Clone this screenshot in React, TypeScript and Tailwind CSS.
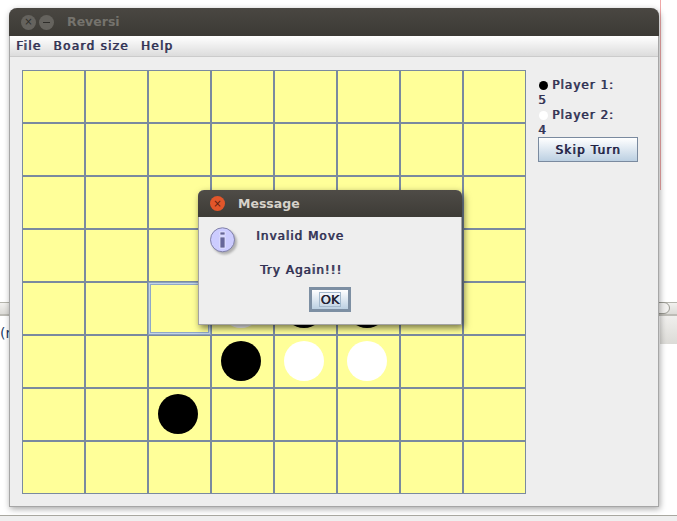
const rows = [0, 1, 2, 3, 4, 5, 6, 7]
const cols = [0, 1, 2, 3, 4, 5, 6, 7]

// board state: row-col -> stone colour
const stones: Record<string, string> = {
  "4-3": "bg-white",
  "4-4": "bg-black",
  "4-5": "bg-black",
  "5-3": "bg-black",
  "5-4": "bg-white",
  "5-5": "bg-white",
  "6-2": "bg-black",
}

// java's synthetic bold: regular glyphs, struck twice, one px wider per glyph
const swingBold = "text-[12px] font-normal tracking-[1px] [text-shadow:0.8px_0_0_currentColor]"

function Board() {
  return (
    <div className="grid grid-cols-[repeat(8,63px)] grid-rows-[repeat(8,53px)]">
      {rows.map((r) =>
        cols.map((c) => {
          const selected = r === 4 && c === 2
          return (
            <div
              key={r + "-" + c}
              className={
                "pl-[9px] pt-[5px] bg-[#ffff99] border " +
                (selected
                  ? "border-[#8aa3bf] shadow-[inset_0_0_0_1px_#c4d4e4,inset_0_0_0_2px_#8fa8c8]"
                  : "border-[#7a8a9f]")
              }
            >
              {stones[r + "-" + c] && <div className={"w-[40px] h-[40px] rounded-full " + stones[r + "-" + c]} />}
            </div>
          )
        })
      )}
    </div>
  )
}

function InfoIcon() {
  return (
    <svg width="30" height="30" viewBox="0 0 30 30" className="shrink-0">
      <defs>
        <filter id="ishadow" x="-20%" y="-20%" width="150%" height="150%">
          <feGaussianBlur stdDeviation="1.2" />
        </filter>
      </defs>
      <circle cx="14.500" cy="15" r="12.500" fill="#888" opacity="0.6" filter="url(#ishadow)" />
      <circle cx="12.500" cy="12.800" r="12" fill="#ccccff" stroke="#8080a8" strokeWidth="1" />
      <rect x="10" y="5" width="5" height="3" fill="#666699" stroke="#eeeeff" strokeWidth="0.7" />
      <rect x="10" y="10" width="5" height="11" fill="#666699" stroke="#eeeeff" strokeWidth="0.7" />
    </svg>
  )
}

function Dialog() {
  return (
    <div className="absolute left-[198px] top-[190px] w-[264px] h-[135px] flex flex-col rounded-t-[6px] border border-t-0 border-[#a3a3a3] bg-[#eeeeee] shadow-[2px_3px_7px_rgba(0,0,0,0.55)]">
      <div className="h-[27px] shrink-0 flex items-center -mx-px rounded-t-[6px] bg-gradient-to-b from-[#4f4c47] to-[#3d3b36]">
        <div className="ml-[12px] w-[15px] h-[15px] rounded-full bg-[#e2562a] flex items-center justify-center text-[10px] leading-none text-[#5a2010]">×</div>
        <span className="ml-[13px] pt-px text-[12.500px] font-bold text-[#d6d2ca]">Message</span>
      </div>
      <div className={"flex flex-col flex-1 text-[#333355] " + swingBold}>
        <div className="flex h-[41px] pl-[11px] pt-[10px]">
          <InfoIcon />
          <span className="ml-[16px] leading-[18px]">Invalid Move</span>
        </div>
        <div className="pl-[61px] mt-[3px] leading-[18px]">Try Again!!!</div>
        <div className="flex justify-center mt-[8px]">
          <div className="w-[42px] h-[25px] border-[3px] border-[#7d8fa3] bg-gradient-to-b from-white to-[#bcd0e2] flex items-center justify-center">
            <span className="w-[22px] h-[15px] border border-[#a3b8cc] text-center text-[13px] tracking-normal leading-[13px] text-[#222233] [text-shadow:0.4px_0_0_currentColor]">OK</span>
          </div>
        </div>
      </div>
    </div>
  )
}

function SidePanel() {
  return (
    <div className={"ml-[12px] w-[100px] pt-[8px] leading-[15px] text-[#333355] " + swingBold}>
      <div className="flex items-center">
        <div className="w-[9px] h-[9px] rounded-full bg-black ml-px" />
        <span className="ml-[4px]">Player 1:</span>
      </div>
      <div>5</div>
      <div className="flex items-center">
        <div className="w-[9px] h-[9px] rounded-full bg-white ml-px" />
        <span className="ml-[4px]">Player 2:</span>
      </div>
      <div>4</div>
      <div className="mt-[-1px] h-[25px] pt-px border border-[#7a8a9f] bg-gradient-to-b from-white to-[#bcd0e2] flex items-center justify-center tracking-[1.2px] text-[#222244]">
        Skip Turn
      </div>
    </div>
  )
}

export default function App() {
  return (
    <div className="relative w-[677px] h-[521px] overflow-hidden bg-white font-['DejaVu_Sans',sans-serif]">
      {/* stuff behind the window */}
      <div className="absolute left-[660px] top-0 w-[1px] h-[190px] bg-[#f0a8a8]" />
      <div className="absolute left-0 top-[302px] w-full h-[12px] border-t border-[#b5b5ad] bg-gradient-to-b from-[#f2f1ef] to-[#dcdbd7]" />
      <div className="absolute left-[655px] top-[302px] w-[15px] h-[12px] rounded-r-full border border-[#9a9a92] bg-[#f2f1ef]" />
      <div className="absolute left-0 top-[314px] w-full h-[2px] bg-[#bdbcb6]" />
      <div className="absolute left-[660px] top-[316px] w-[17px] h-[28px] bg-gradient-to-b from-[#f0efed] to-[#dcdbd7]" />
      <div className="absolute left-0 top-[324px] text-[14px] leading-[18px] text-[#223a66]">(r</div>
      <div className="absolute left-0 top-[515px] w-full h-[6px] border-t border-[#a9a8a0] bg-[#efefef]" />

      {/* main window */}
      <div className="absolute left-[9px] top-[8px] w-[650px] h-[499px] flex flex-col rounded-t-[8px] border border-t-0 border-[#a6a6a6] bg-[#eeeeee] shadow-[1px_2px_6px_rgba(0,0,0,0.35)]">
        <div className="h-[28px] shrink-0 -mx-px flex items-center rounded-t-[8px] bg-gradient-to-b from-[#4a4742] to-[#3c3a35]">
          <div className="ml-[12px] w-[15px] h-[15px] rounded-full bg-[#65635e] flex items-center justify-center text-[10px] leading-none text-[#2e2d2a]">×</div>
          <div className="ml-[3px] w-[15px] h-[15px] rounded-full bg-[#65635e] flex items-center justify-center">
            <div className="w-[7px] h-px bg-[#2e2d2a]" />
          </div>
          <span className="ml-[13px] text-[12.500px] font-bold text-[#75736d]">Reversi</span>
        </div>
        <div className={"h-[21px] shrink-0 flex items-center pl-[6px] gap-[12px] border-b border-[#cbcbcb] bg-gradient-to-b from-white to-[#dcdcdc] text-[#333355] " + swingBold + " tracking-[1.300px]"}>
          <span className="tracking-[1.300px]">File</span>
          <span className="tracking-[1.300px]">Board size</span>
          <span className="tracking-[1.300px]">Help</span>
        </div>
        <div className="flex pl-[12px] pt-[13px]">
          <Board />
          <SidePanel />
        </div>
      </div>

      <Dialog />
    </div>
  )
}
